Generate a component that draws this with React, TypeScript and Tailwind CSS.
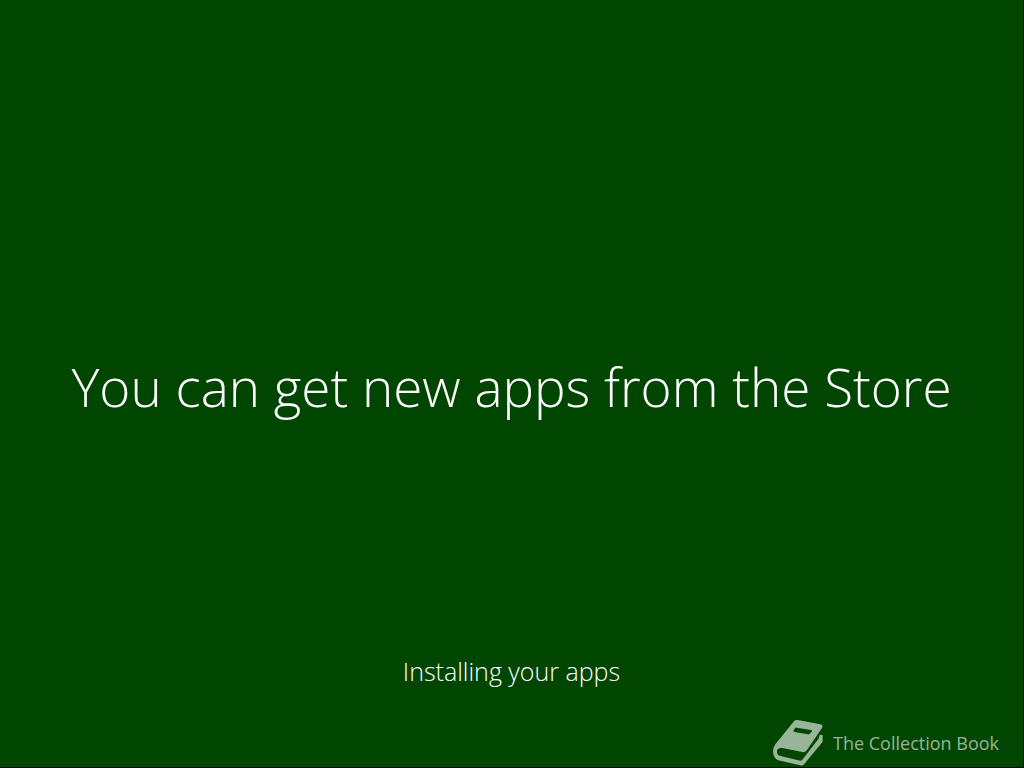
function BookIcon() {
  return (
    <svg viewBox="30 33 156 144" className="h-12 w-[52px]" aria-hidden="true">
      {/* cover and pages edge, with the title label cut out */}
      <path
        fill="currentColor"
        fillRule="evenodd"
        d="M93 40Q97 35 104 36L172 49Q182 51 177 60L132 126Q127 134 118 132L58 120Q44 118 42 128Q41 140 50 143L112 158Q115 158 118 155L166 93Q169 89 169 82Q174 78 179 82L179 98Q179 102 176 105L123 169Q119 174 112 172L46 157Q32 152 30 132Q30 118 37 109ZM101 59Q97 58 95 62L92 67Q90 71 95 72L134 79Q139 80 142 76L146 71Q149 67 144 66Z"
      />
    </svg>
  );
}

export default function App() {
  return (
    <main className="flex min-h-screen flex-col border-r border-b border-black bg-[#004600] font-['Open_Sans','Segoe_UI',sans-serif] font-light text-white">
      <div className="flex flex-1 flex-col justify-end pt-40 pb-[30px]">
        <h1 className="px-4 text-center text-[53px] leading-[72px]">You can get new apps from the Store</h1>
        <p className="mt-[230px] text-center text-[25px] leading-9">Installing your apps</p>
      </div>
      <footer className="flex items-center justify-end gap-2 pr-6 text-lg font-normal text-white/60">
        <BookIcon />
        <span>The Collection Book</span>
      </footer>
    </main>
  );
}
